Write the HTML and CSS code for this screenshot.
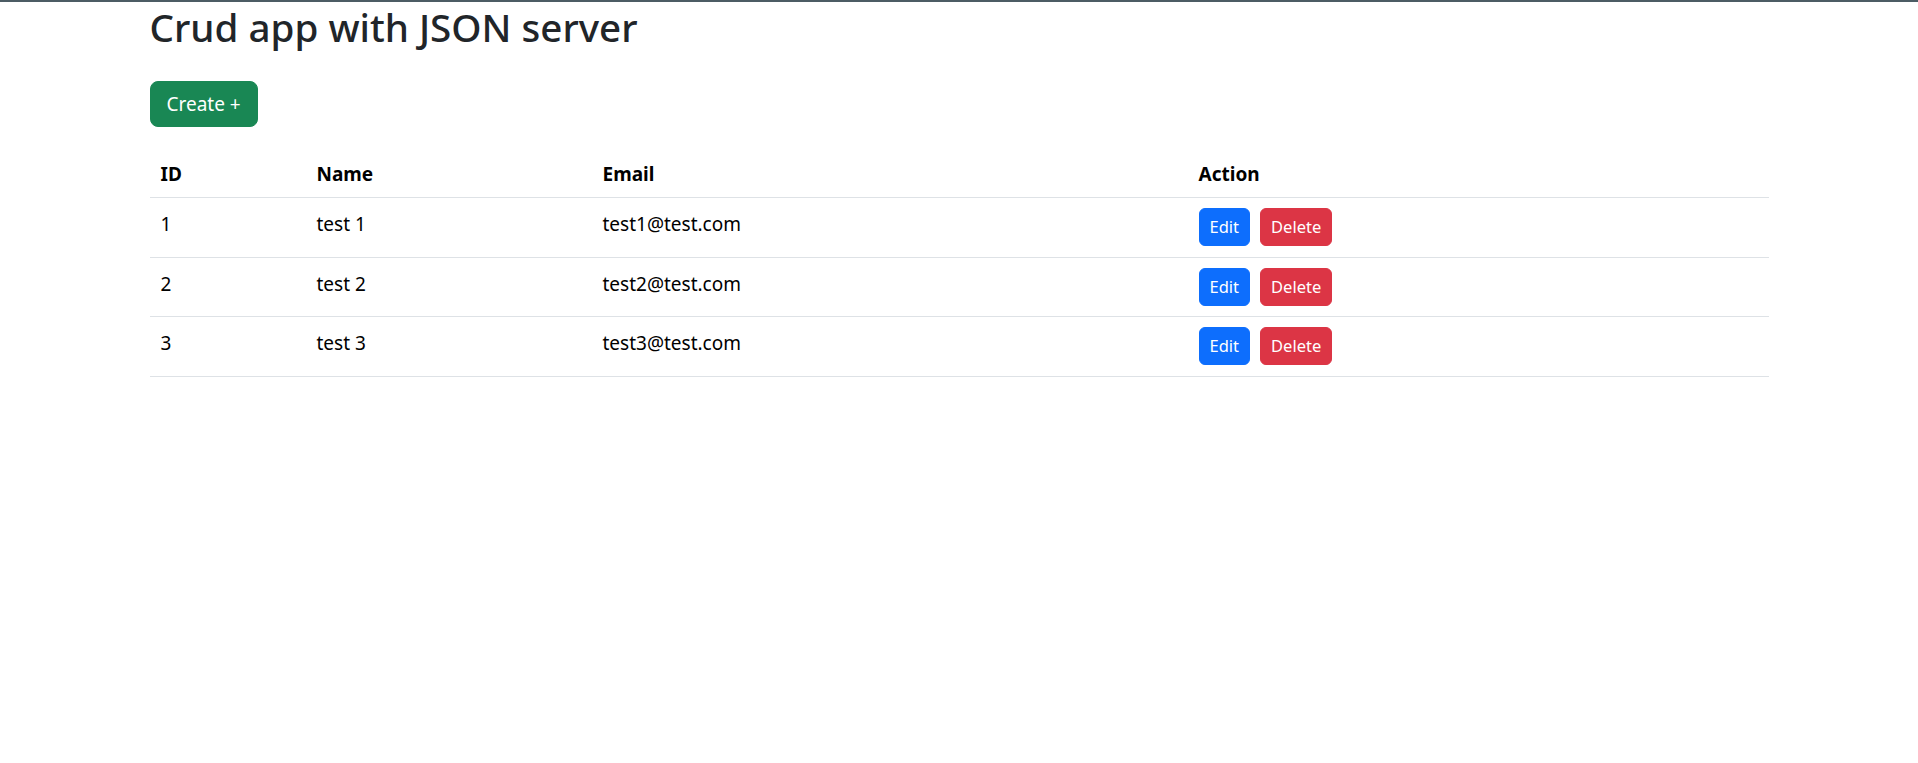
FILE: index.html
```html
<!DOCTYPE html>
<html lang="en">
<head>
<meta charset="utf-8">
<title>Crud app with JSON server</title>
<link rel="stylesheet" href="styles.css">
</head>
<body>
<div class="topbar"></div>
<main class="container">
  <h1 class="title">Crud app with JSON server</h1>
  <div class="toolbar">
    <button class="btn btn-lg btn-success">Create +</button>
  </div>
  <table class="table">
    <thead>
      <tr>
        <th class="col-id">ID</th>
        <th class="col-name">Name</th>
        <th class="col-email">Email</th>
        <th class="col-action">Action</th>
      </tr>
    </thead>
    <tbody>
      <tr>
        <td class="cell-id">1</td>
        <td>test 1</td>
        <td>test1@test.com</td>
        <td><span class="actions"><button class="btn btn-primary">Edit</button><button class="btn btn-danger">Delete</button></span></td>
      </tr>
      <tr>
        <td class="cell-id">2</td>
        <td>test 2</td>
        <td>test2@test.com</td>
        <td><span class="actions"><button class="btn btn-primary">Edit</button><button class="btn btn-danger">Delete</button></span></td>
      </tr>
      <tr>
        <td class="cell-id">3</td>
        <td>test 3</td>
        <td>test3@test.com</td>
        <td><span class="actions"><button class="btn btn-primary">Edit</button><button class="btn btn-danger">Delete</button></span></td>
      </tr>
    </tbody>
  </table>
</main>
</body>
</html>
```

FILE: styles.css
```css
* { box-sizing: border-box; }

html, body {
  margin: 0;
  padding: 0;
  background: #fff;
}

body {
  font-family: "Noto Sans", "Open Sans", sans-serif;
  font-size: 16px;
  line-height: 1.5;
  color: #212529;
}

.topbar {
  height: 2px;
  background: #4c5c64;
}

.container {
  width: 1619px;
  margin: 0 auto;
}

.title {
  margin: 2px 0 8px;
  font-size: 38.6px;
  font-weight: 500;
  line-height: 47px;
  color: #212529;
}

.toolbar {
  margin-top: 30px;
  margin-bottom: 24px;
}

.btn {
  display: inline-block;
  font-family: inherit;
  font-size: 16.5px;
  font-weight: 400;
  line-height: 24px;
  padding: 6px 10px;
  border: 1px solid transparent;
  border-radius: 6px;
  color: #fff;
  cursor: pointer;
}

.btn-lg {
  font-size: 19px;
  line-height: 30px;
  padding: 7px 16px;
  border-radius: 8px;
}

.btn-success { background: #198754; border-color: #198754; }
.btn-primary { background: #0d6efd; border-color: #0d6efd; }
.btn-danger { background: #dc3545; border-color: #dc3545; }

.table {
  width: 100%;
  border-collapse: collapse;
  font-size: 19px;
  color: #000;
}

.table th,
.table td {
  padding: 8px;
  text-align: left;
  border-bottom: 1px solid #dee2e6;
  line-height: 30px;
}

.table th { font-weight: 700; }

.table td {
  vertical-align: top;
  padding-top: 11px;
  padding-bottom: 8px;
  height: 59.5px;
}

.table .col-id,
.table .cell-id { padding-left: 11px; }

.col-id { width: 159px; }
.col-name { width: 286px; }
.col-email { width: 596px; }

.actions {
  display: inline-flex;
  gap: 10px;
  vertical-align: top;
  margin-top: -1px;
}
```
